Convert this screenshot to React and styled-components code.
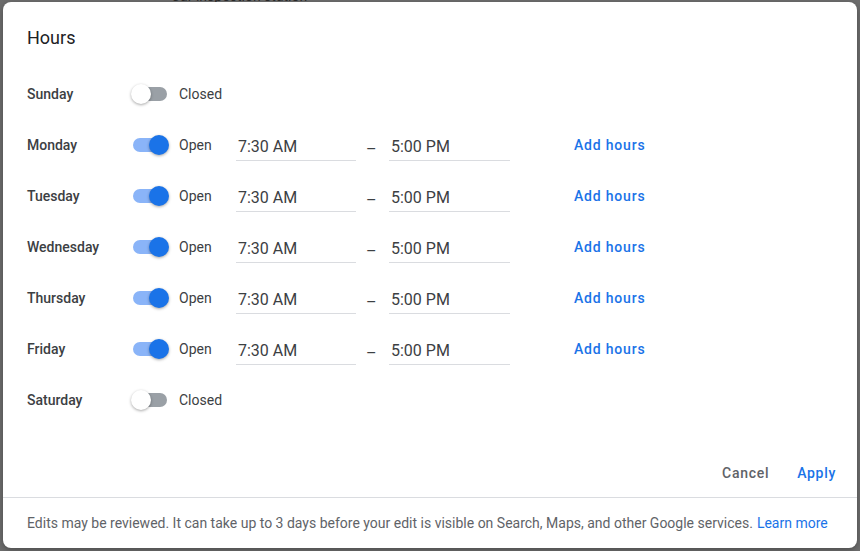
import React from "react";
import styled, { createGlobalStyle } from "styled-components";

const GlobalStyle = createGlobalStyle`
	html, body {
		margin: 0;
		padding: 0;
		background: #6d6d6d;
		font-family: Roboto, "Noto Sans", Arial, sans-serif;
	}
`;

const Backdrop = styled.div`
	position: relative;
	width: 860px;
	height: 551px;
	overflow: hidden;
	padding: 2px 3px 3px 3px;
	box-sizing: border-box;
`;

const PageText = styled.div`
	position: absolute;
	top: -12px;
	left: 171px;
	font-size: 14px;
	color: #2a2a2a;
`;

const Dialog = styled.div`
	position: relative;
	width: 854px;
	height: 546px;
	background: #fff;
	border-radius: 8px;
	box-shadow: 0 2px 6px rgba(0, 0, 0, 0.3);
	display: flex;
	flex-direction: column;
	box-sizing: border-box;
	overflow: hidden;
`;

const Title = styled.h2`
	margin: 0;
	padding: 24px 24px 0 24px;
	font-size: 18px;
	font-weight: 400;
	line-height: 24px;
	color: #202124;
`;

const Rows = styled.div`
	display: flex;
	flex-direction: column;
	margin-top: 18px;
	padding-left: 24px;
`;

const Row = styled.div`
	display: flex;
	align-items: center;
	height: 51px;
`;

const Day = styled.div`
	width: 104px;
	font-size: 14px;
	font-weight: 500;
	color: #3c4043;
`;

const Switch = styled.div`
	position: relative;
	width: 38px;
	height: 20px;
	flex-shrink: 0;
`;

const Track = styled.div`
	position: absolute;
	left: 2px;
	right: 2px;
	top: 3px;
	height: 14px;
	border-radius: 7px;
	background: ${(p) => (p.$on ? "#8ab4f8" : "#9aa0a6")};
`;

const Thumb = styled.div`
	position: absolute;
	top: 0;
	left: ${(p) => (p.$on ? "18px" : "0")};
	width: 20px;
	height: 20px;
	border-radius: 50%;
	background: ${(p) => (p.$on ? "#1a73e8" : "#fff")};
	box-shadow: 0 1px 3px rgba(0, 0, 0, 0.35);
`;

const Status = styled.div`
	width: 57px;
	margin-left: 10px;
	font-size: 14px;
	color: #3c4043;
`;

const TimeField = styled.div`
	width: ${(p) => p.$w}px;
	box-sizing: border-box;
	padding: 6px 2px 1px 2px;
	font-size: 16px;
	line-height: 24px;
	color: #3c4043;
	border-bottom: 1px solid #dadce0;
`;

const Dash = styled.div`
	width: 33px;
	padding-left: 10px;
	box-sizing: border-box;
	padding-top: 10px;
	font-size: 16px;
	color: #3c4043;
`;

const AddHours = styled.a`
	margin-left: 64px;
	font-size: 14px;
	font-weight: 500;
	letter-spacing: 0.8px;
	color: #1a73e8;
	cursor: pointer;
`;

const Actions = styled.div`
	display: flex;
	justify-content: flex-end;
	gap: 12px;
	margin-top: 30px;
	padding: 0 13px 6px 0;
`;

const Button = styled.button`
	height: 36px;
	padding: 0 8px;
	border: none;
	background: transparent;
	font-family: inherit;
	font-size: 14px;
	font-weight: 500;
	letter-spacing: 0.7px;
	color: ${(p) => (p.$primary ? "#1a73e8" : "#5f6368")};
	cursor: pointer;
`;

const Footer = styled.div`
	border-top: 1px solid #dadce0;
	flex: 1;
	display: flex;
	align-items: center;
	padding: 0 24px;
	font-size: 14px;
	color: #5f6368;
	white-space: nowrap;
`;

const Link = styled.a`
	color: #1a73e8;
	margin-left: 4px;
`;

const days = [
	{ name: "Sunday", open: false },
	{ name: "Monday", open: true },
	{ name: "Tuesday", open: true },
	{ name: "Wednesday", open: true },
	{ name: "Thursday", open: true },
	{ name: "Friday", open: true },
	{ name: "Saturday", open: false },
];

const App = () => {
	return (
		<>
			<GlobalStyle />
			<Backdrop>
				<PageText>Car inspection station</PageText>
				<Dialog>
					<Title>Hours</Title>
					<Rows>
						{days.map((d) => (
							<Row key={d.name}>
								<Day>{d.name}</Day>
								<Switch>
									<Track $on={d.open} />
									<Thumb $on={d.open} />
								</Switch>
								<Status>{d.open ? "Open" : "Closed"}</Status>
								{d.open && (
									<>
										<TimeField $w={120}>7:30 AM</TimeField>
										<Dash>–</Dash>
										<TimeField $w={121}>5:00 PM</TimeField>
										<AddHours>Add hours</AddHours>
									</>
								)}
							</Row>
						))}
					</Rows>
					<Actions>
						<Button>Cancel</Button>
						<Button $primary>Apply</Button>
					</Actions>
					<Footer>
						Edits may be reviewed. It can take up to 3 days before your edit is visible on Search, Maps, and other Google services.
						<Link>Learn more</Link>
					</Footer>
				</Dialog>
			</Backdrop>
		</>
	);
};

export default App;
